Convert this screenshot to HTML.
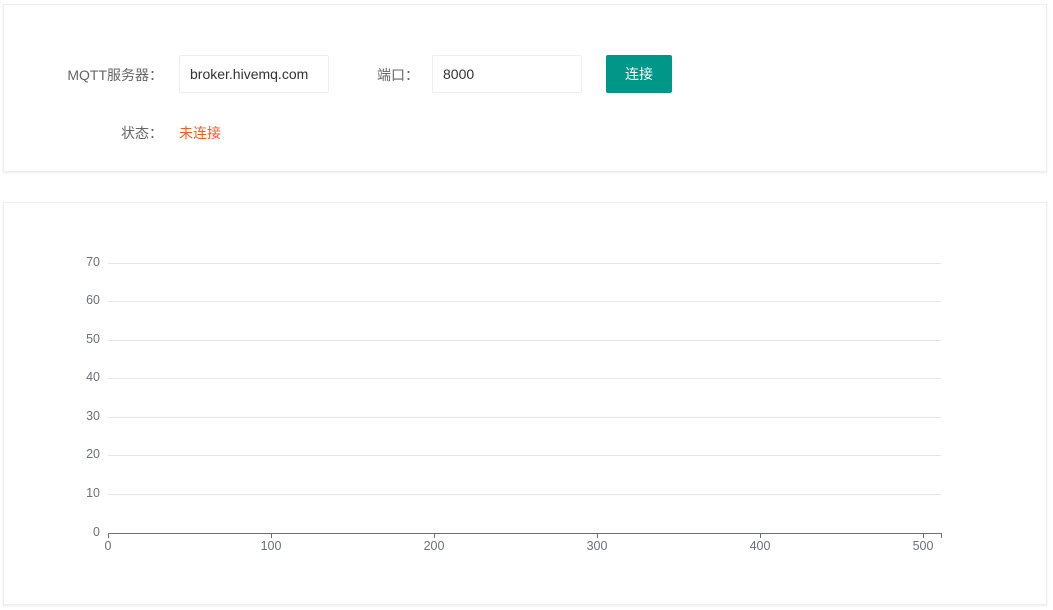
<!DOCTYPE html>
<html><head><meta charset="utf-8"><style>
body{margin:0;width:1053px;height:610px;background:#fff;font-family:"Liberation Sans","Noto Sans CJK SC",sans-serif;font-size:14px;position:relative;overflow:hidden}
.card{position:absolute;left:3px;width:1042px;background:#fff;border:1px solid #eee;box-shadow:0 1px 2px rgba(0,0,0,.08)}
.lbl{position:absolute;color:#666;text-align:right}
.inp{position:absolute;top:55px;border:1px solid #eee;border-radius:2px;box-sizing:border-box;height:38px;line-height:36px;padding-left:10px;color:#333}
.btn{position:absolute;left:606px;top:55px;width:66px;height:38px;background:#009688;color:#fff;line-height:38px;text-align:center;border-radius:2px}
</style></head><body>
<div class="card" style="top:4px;height:166px"></div>
<div class="lbl" style="left:47px;width:116px;top:65px">MQTT服务器：</div>
<div class="inp" style="left:179px;width:150px">broker.hivemq.com</div>
<div class="lbl" style="left:357px;width:62px;top:65px">端口：</div>
<div class="inp" style="left:432px;width:150px">8000</div>
<div class="btn">连接</div>
<div class="lbl" style="left:107px;width:56px;top:123px">状态：</div>
<div style="position:absolute;left:179px;top:123px;color:#ff5722">未连接</div>
<div class="card" style="top:202px;height:401px"></div>
<svg style="position:absolute;left:0;top:0" width="1053" height="610">
<g stroke="#e0e6f1" stroke-width="1">
<line x1="108" x2="941" y1="263.5" y2="263.5"/><line x1="108" x2="941" y1="301.5" y2="301.5"/><line x1="108" x2="941" y1="340.5" y2="340.5"/><line x1="108" x2="941" y1="378.5" y2="378.5"/><line x1="108" x2="941" y1="417.5" y2="417.5"/><line x1="108" x2="941" y1="455.5" y2="455.5"/><line x1="108" x2="941" y1="494.5" y2="494.5"/>
</g>
<g stroke="#6e7079"><line x1="108" x2="941" y1="533.5" y2="533.5"/>
<line x1="108.5" x2="108.5" y1="533" y2="538"/><line x1="271.5" x2="271.5" y1="533" y2="538"/><line x1="434.5" x2="434.5" y1="533" y2="538"/><line x1="597.5" x2="597.5" y1="533" y2="538"/><line x1="760.5" x2="760.5" y1="533" y2="538"/><line x1="923.5" x2="923.5" y1="533" y2="538"/><line x1="941.5" x2="941.5" y1="533" y2="538"/></g>
<g fill="#6e7079" font-family="Liberation Sans,sans-serif" font-size="12.5" text-anchor="end">
<text x="100" y="266">70</text><text x="100" y="304">60</text><text x="100" y="343">50</text><text x="100" y="381">40</text><text x="100" y="420">30</text><text x="100" y="458">20</text><text x="100" y="497">10</text><text x="100" y="536">0</text></g>
<g fill="#6e7079" font-family="Liberation Sans,sans-serif" font-size="12.5" text-anchor="middle">
<text x="108" y="550">0</text><text x="271" y="550">100</text><text x="434" y="550">200</text><text x="597" y="550">300</text><text x="760" y="550">400</text><text x="923" y="550">500</text></g>
</svg>
</body></html>
